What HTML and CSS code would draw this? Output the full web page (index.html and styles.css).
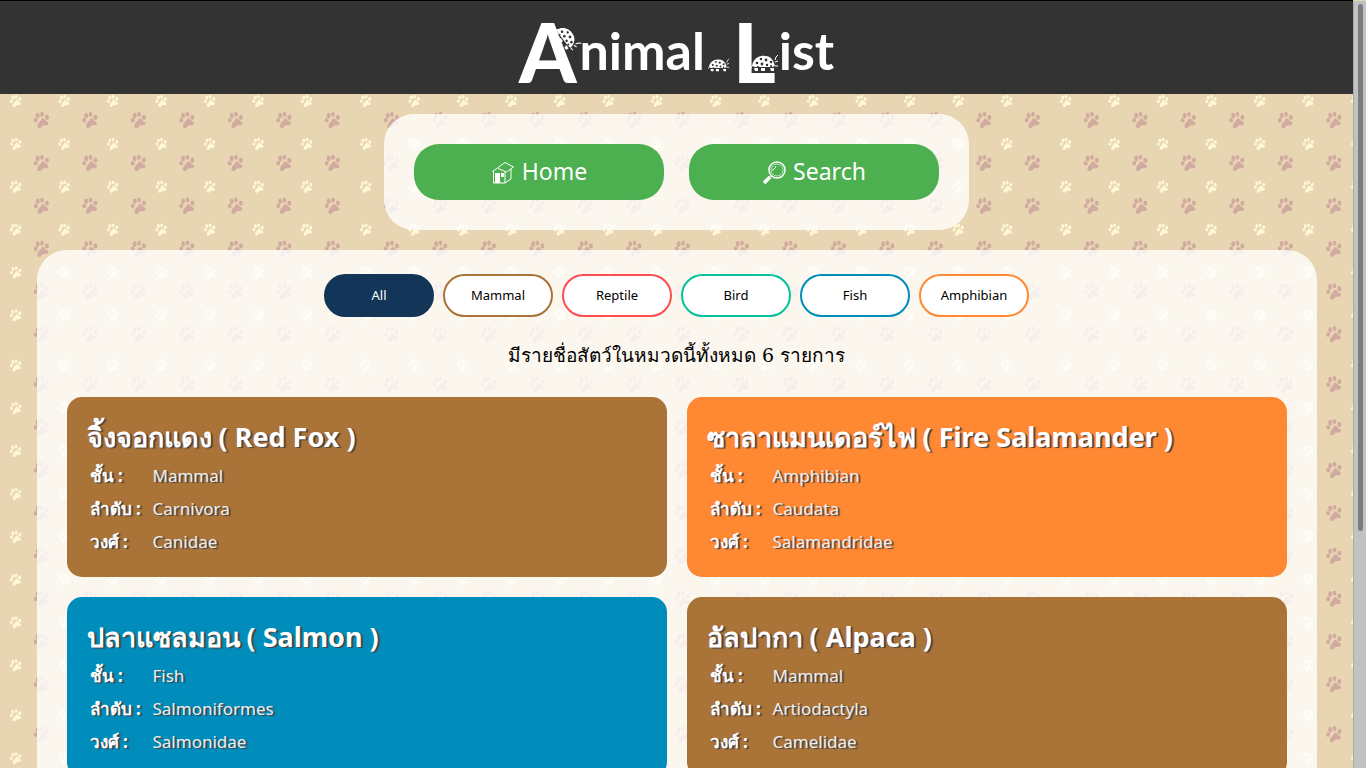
FILE: index.html
```html
<!DOCTYPE html>
<html lang="th">
<head>
<meta charset="utf-8">
<meta name="viewport" content="width=device-width, initial-scale=1">
<title>Animal List</title>
<link rel="stylesheet" href="styles.css">
</head>
<body>
<svg class="defs" aria-hidden="true">
  <symbol id="ladybug" viewBox="0 0 28 18">
    <path fill="#fff" d="M1 12C2 5 8 1 14 2c6 0 9 5 10 10l-3 1H4zM3 14h4v3H4zM10 14h4v3h-4zM19 14h4v3h-3z"/>
    <path fill="none" stroke="#fff" d="M24 6l1-3 2-2M24 8l3-1M24 12h3M1 12l-1 2"/>
    <g fill="#333"><circle cx="6" cy="9" r="1.3"/><circle cx="10" cy="5" r="1.2"/><circle cx="11" cy="10" r="1.4"/><circle cx="15" cy="6" r="1.4"/><circle cx="16" cy="11" r="1.2"/><circle cx="20" cy="8" r="1.3"/><circle cx="7" cy="13" r="1"/><circle cx="20" cy="12" r="1"/></g>
  </symbol>
</svg>
<header class="header">
  <h1 class="logo">
    <span class="logo-big">A<svg class="bug bug-a"><use href="#ladybug"/></svg></span><span class="logo-small">nimal</span><svg class="bug bug-mid" viewBox="0 0 28 18"><use href="#ladybug"/></svg><span class="logo-big">L<svg class="bug bug-l"><use href="#ladybug"/></svg></span><span class="logo-small">ist</span>
  </h1>
</header>
<nav class="menu">
  <a class="menu-link" href="#home"><svg class="menu-icon" viewBox="0 0 24 24" aria-hidden="true"><path fill="none" stroke="currentColor" d="M1.500 10.500L14 1.500l8.500 4.500-7 5L7 7.500M2.500 10v12h11.500V10M14 22l6-4V8"/><path fill="currentColor" d="M4 12h5v10H4zM10 12h3v4h-3z"/></svg>Home</a>
  <a class="menu-link" href="#search"><svg class="menu-icon" viewBox="0 0 24 24" aria-hidden="true"><circle cx="15" cy="9" r="8" fill="none" stroke="currentColor" stroke-width="1.500"/><circle cx="15" cy="9" r="6" fill="none" stroke="currentColor" stroke-width=".6"/><path fill="none" stroke="currentColor" d="M10 9c1 0 3-1 4-4M9 15l-2 2"/><path stroke="currentColor" stroke-width="3.500" d="M8 16l-6 6"/></svg>Search</a>
</nav>
<main class="panel">
  <div class="filters">
    <button class="filter all" type="button">All</button>
    <button class="filter mammal" type="button">Mammal</button>
    <button class="filter reptile" type="button">Reptile</button>
    <button class="filter bird" type="button">Bird</button>
    <button class="filter fish" type="button">Fish</button>
    <button class="filter amphibian" type="button">Amphibian</button>
  </div>
  <p class="count">มีรายชื่อสัตว์ในหมวดนี้ทั้งหมด 6 รายการ</p>
  <div class="cards">
    <article class="card card-mammal">
      <h2 class="card-title">จิ้งจอกแดง ( Red Fox )</h2>
      <table class="facts">
        <tr><th scope="row">ชั้น :</th><td>Mammal</td></tr>
        <tr><th scope="row">ลำดับ :</th><td>Carnivora</td></tr>
        <tr><th scope="row">วงศ์ :</th><td>Canidae</td></tr>
      </table>
    </article>
    <article class="card card-amphibian">
      <h2 class="card-title">ซาลาแมนเดอร์ไฟ ( Fire Salamander )</h2>
      <table class="facts">
        <tr><th scope="row">ชั้น :</th><td>Amphibian</td></tr>
        <tr><th scope="row">ลำดับ :</th><td>Caudata</td></tr>
        <tr><th scope="row">วงศ์ :</th><td>Salamandridae</td></tr>
      </table>
    </article>
    <article class="card card-fish">
      <h2 class="card-title">ปลาแซลมอน ( Salmon )</h2>
      <table class="facts">
        <tr><th scope="row">ชั้น :</th><td>Fish</td></tr>
        <tr><th scope="row">ลำดับ :</th><td>Salmoniformes</td></tr>
        <tr><th scope="row">วงศ์ :</th><td>Salmonidae</td></tr>
      </table>
    </article>
    <article class="card card-mammal">
      <h2 class="card-title">อัลปากา ( Alpaca )</h2>
      <table class="facts">
        <tr><th scope="row">ชั้น :</th><td>Mammal</td></tr>
        <tr><th scope="row">ลำดับ :</th><td>Artiodactyla</td></tr>
        <tr><th scope="row">วงศ์ :</th><td>Camelidae</td></tr>
      </table>
    </article>
  </div>
</main>
<div class="scrollbar" aria-hidden="true"><div class="thumb"></div></div>
</body>
</html>
```
FILE: styles.css
```css
* { box-sizing: border-box; }

body {
  margin: 0;
  padding-right: 13px;
  font-family: "Noto Sans", "Open Sans", sans-serif;
  background: #e8d5b1 url("data:image/svg+xml,%3Csvg xmlns='http://www.w3.org/2000/svg' xmlns:xlink='http://www.w3.org/1999/xlink' width='350' height='350'%3E%3Cdefs%3E%3Cg id='p'%3E%3Cellipse cx='-5.500' cy='0' rx='1.900' ry='2.300'/%3E%3Cellipse cx='-3.500' cy='-4.800' rx='1.900' ry='2.800'/%3E%3Cellipse cx='.8' cy='-6' rx='1.800' ry='2.500'/%3E%3Cellipse cx='5.700' cy='-3' rx='2' ry='2.600'/%3E%3Cpath d='M1-2Q3-2 4 0L7 2Q8 4 6 5L2 5 0 7Q-2 9-4 6.500L-3 3-1 1Z'/%3E%3C/g%3E%3Cg id='c'%3E%3Cuse xlink:href='%23p' transform='translate(15.500 15.500) scale(.75)' fill='%23fff9d3'/%3E%3Cuse xlink:href='%23p' x='41.200' y='34.600' fill='%23d1aaa0'/%3E%3C/g%3E%3Cg id='r'%3E%3Cuse xlink:href='%23c'/%3E%3Cuse xlink:href='%23c' x='48.500'/%3E%3Cuse xlink:href='%23c' x='97'/%3E%3Cuse xlink:href='%23c' x='145.500'/%3E%3Cuse xlink:href='%23c' x='194'/%3E%3Cuse xlink:href='%23c' x='242.500'/%3E%3Cuse xlink:href='%23c' x='291'/%3E%3C/g%3E%3C/defs%3E%3Cuse xlink:href='%23r'/%3E%3Cuse xlink:href='%23r' y='42.850'/%3E%3Cuse xlink:href='%23r' y='85.700'/%3E%3Cuse xlink:href='%23r' y='128.600'/%3E%3Cuse xlink:href='%23r' y='171.400'/%3E%3Cuse xlink:href='%23r' y='214.300'/%3E%3Cuse xlink:href='%23r' y='257.100'/%3E%3Cuse xlink:href='%23r' y='300'/%3E%3C/svg%3E");
}

.defs { display: none; }

.header {
  display: flex;
  justify-content: center;
  height: 94px;
  border-top: 1px solid #000;
  background: #333;
  color: #fff;
}

.logo {
  display: flex;
  align-items: flex-start;
  gap: 3px;
  margin: 0;
  font-family: Lato, sans-serif;
  font-weight: 900;
}

.logo-big { position: relative; font-size: 82px; line-height: 100px; }
.logo-small { font-size: 52px; font-weight: 700; line-height: 98px; }
.bug { width: 28px; height: 18px; }
.bug-mid { width: 22px; height: 14px; margin-top: 57px; }
.bug-a { position: absolute; top: 28px; right: -5px; transform: rotate(52deg); }
.bug-l { position: absolute; top: 53px; right: -3px; }

.menu {
  display: flex;
  gap: 25px;
  width: fit-content;
  margin: 20px auto;
  padding: 30px;
  border-radius: 30px;
  background: rgba(255, 255, 255, .8);
}

.menu-link {
  display: flex;
  align-items: center;
  justify-content: center;
  gap: 7px;
  width: 250px;
  height: 56px;
  padding-bottom: 2px;
  border-radius: 25px;
  background: #4caf50;
  color: #fff;
  font-size: 23px;
  text-decoration: none;
}

.menu-icon { width: 24px; height: 24px; margin-top: 3px; }

.panel {
  max-width: 1280px;
  margin: 0 auto;
  padding: 24px 30px 30px;
  border-radius: 30px;
  background: rgba(255, 255, 255, .8);
}

.filters { display: flex; justify-content: center; gap: 9px; }

.filter {
  width: 110px;
  height: 43px;
  padding: 0 0 2px;
  border: 2px solid;
  border-radius: 25px;
  background: #fff;
  font-family: inherit;
  font-size: 13px;
}

.all { border-color: #133557; background: #133557; color: #fff; }
.mammal { border-color: #aa7337; color: #000; }
.reptile { border-color: #ff4d4d; color: #000; }
.bird { border-color: #05c19c; color: #000; }
.fish { border-color: #008dbc; color: #000; }
.amphibian { border-color: #ff8833; color: #000; }

.count {
  margin: 20px 0 24px;
  font-family: "DejaVu Serif", serif;
  font-size: 19px;
  line-height: 36px;
  text-align: center;
}

.cards { display: grid; grid-template-columns: 1fr 1fr; gap: 20px; }

.card {
  min-height: 180px;
  padding: 20px 20px 16px;
  border-radius: 15px;
  color: #fff;
  text-shadow: 2px 1px 1px #444;
}

.card-mammal { background: #aa7337; }
.card-amphibian { background: #ff8833; }
.card-fish { background: #008dbc; }

.card-title { margin: 0 0 2px; font-size: 27px; line-height: 40px; }

.facts { border-spacing: 0; font-size: 17px; line-height: 33px; }
.facts th { min-width: 66px; padding: 0 6px 0 3px; text-align: left; }
.facts td { padding: 0; color: #eee; }

.scrollbar {
  position: fixed;
  top: 1px;
  right: 0;
  bottom: 0;
  width: 13px;
  padding: 3px 3px 0 4px;
  border-left: 1px solid #aaa;
  background: #c1c3c3;
}

.thumb { height: 69%; border-radius: 3px; background: #7a7d7d; }
```
